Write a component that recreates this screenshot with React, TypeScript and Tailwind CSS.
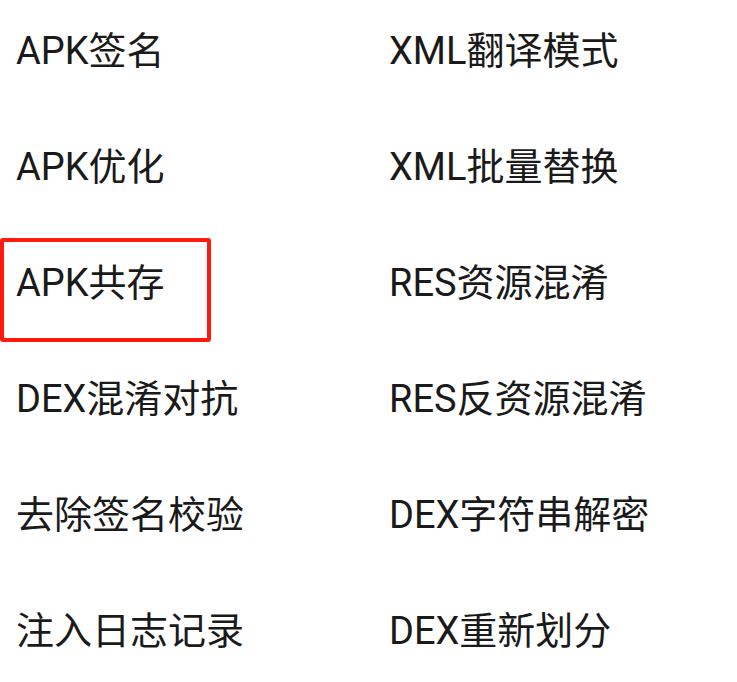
import React from 'react'

const items = [
  ['APK签名', 'XML翻译模式'],
  ['APK优化', 'XML批量替换'],
  ['APK共存', 'RES资源混淆'],
  ['DEX混淆对抗', 'RES反资源混淆'],
  ['去除签名校验', 'DEX字符串解密'],
  ['注入日志记录', 'DEX重新划分'],
]

const App = () => {
  return (
    <div
      className="w-[737px] h-[682px] overflow-hidden bg-white pt-[32px] text-[#1a1a1a]"
      style={{ fontFamily: 'Roboto, "Noto Sans CJK SC", sans-serif' }}
    >
      <div className="grid grid-cols-[373px_1fr]">
        {items.map((row, i) =>
          row.map((label, j) => (
            <div key={`${i}-${j}`} className="relative h-[116px] pl-4">
              {label === 'APK共存' && (
                <span className="absolute left-0 top-[-26px] w-[211px] h-[104px] border-4 border-[#ff1a0f] rounded-[3px]" />
              )}
              <span className="relative text-[38px] leading-none">{label}</span>
            </div>
          ))
        )}
      </div>
    </div>
  )
}

export default App
